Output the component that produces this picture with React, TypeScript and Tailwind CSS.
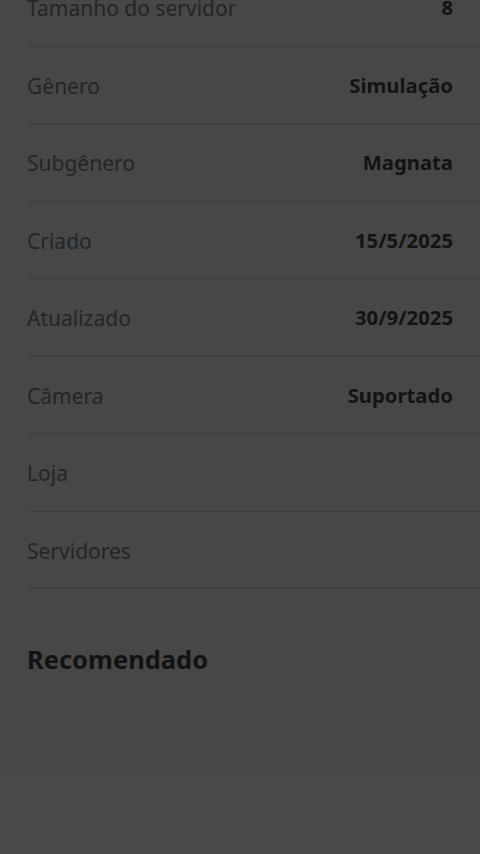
import React from "react";

const rows: [string, string][] = [
  ["Tamanho do servidor", "8"],
  ["Gênero", "Simulação"],
  ["Subgênero", "Magnata"],
  ["Criado", "15/5/2025"],
  ["Atualizado", "30/9/2025"],
  ["Câmera", "Suportado"],
  ["Loja", ""],
  ["Servidores", ""],
];

export default function App() {
  return (
    <div
      className="w-[480px] h-[854px] overflow-hidden bg-[#4a4a4a] flex flex-col"
      style={{ fontFamily: '"Noto Sans", "Open Sans", sans-serif' }}
    >
      <div className="bg-[#474747] h-[775px] flex flex-col overflow-hidden">
        <div className="-mt-[31px] pl-[27px] flex flex-col">
          {rows.map(([k, v]) => (
            <div
              key={k}
              className="h-[77.5px] flex items-center justify-between pr-[27px] border-b border-[#3e3e3e] shrink-0"
            >
              <span className="text-[21px] text-[#252525] leading-[28px] mt-[2px]">{k}</span>
              <span className="text-[20.3px] font-bold text-[#131313] leading-[28px]">{v}</span>
            </div>
          ))}
        </div>
        <div className="pl-[27px] pt-[52px]">
          <h2 className="text-[25.5px] font-bold text-[#121212] leading-[36px]">Recomendado</h2>
        </div>
      </div>
    </div>
  );
}
